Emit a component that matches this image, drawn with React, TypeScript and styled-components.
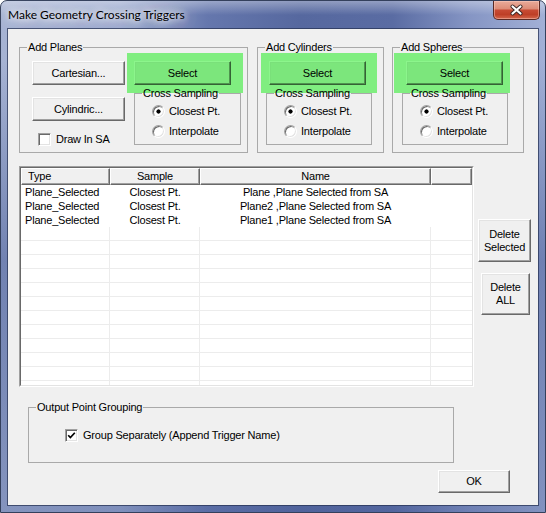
import React from "react";
import styled, { createGlobalStyle, css } from "styled-components";

const GlobalStyle = createGlobalStyle`
  html, body {
    margin: 0;
    padding: 0;
    background: #ffffff;
  }
  body {
    font-family: "Liberation Sans", Arial, sans-serif;
  }
`;

const DIALOG_FONT = css`
  font-family: "Liberation Sans", Arial, sans-serif;
  font-size: 11px;
  letter-spacing: -0.2px;
  color: #000;
`;

const Frame = styled.div`
  box-sizing: border-box;
  width: 546px;
  height: 513px;
  display: flex;
  flex-direction: column;
  padding: 0 7px 7px;
  border: 1px solid #34405c;
  border-radius: 7px 7px 0 0;
  background:
    linear-gradient(180deg, rgba(255, 255, 255, 0.35) 0px, rgba(255, 255, 255, 0) 14px),
    linear-gradient(180deg, rgba(70, 90, 150, 0) 0px, rgba(70, 90, 150, 0) 60px, rgba(70, 90, 150, 0.55) 260px, rgba(70, 90, 150, 0.35) 100%),
    linear-gradient(90deg, #a6b3d3 0%, #9eacd0 22%, #6577ad 38%, #56689f 55%, #5a6ca3 72%, #8595c4 86%, #a2b0d6 100%);
`;

const TitleBar = styled.div`
  height: 28px;
  display: flex;
  align-items: flex-start;
`;

const TitleText = styled.div`
  padding-top: 6px;
  font-family: Lato, "Liberation Sans", sans-serif;
  font-size: 12px;
  line-height: 16px;
  color: #000;
  text-shadow:
    0 0 6px rgba(255, 255, 255, 0.95),
    0 0 10px rgba(255, 255, 255, 0.9),
    0 0 16px rgba(255, 255, 255, 0.8),
    0 0 22px rgba(255, 255, 255, 0.7);
`;

const CloseButton = styled.div`
  box-sizing: border-box;
  margin-left: auto;
  margin-right: -2px;
  width: 47px;
  height: 19px;
  display: flex;
  align-items: center;
  justify-content: center;
  border: 1px solid #5a2a24;
  border-top: none;
  border-radius: 0 0 5px 5px;
  background: linear-gradient(180deg, #e9ab9a 0%, #dd8d78 42%, #c74a33 52%, #be3f27 75%, #d3674c 100%);
  box-shadow: inset 0 0 0 1px rgba(255, 210, 200, 0.45);
`;

const Client = styled.div`
  flex: 1;
  display: flex;
  flex-direction: column;
  padding: 12px 0 0 11px;
  background: #f0f0f0;
  box-shadow: 0 0 0 1px rgba(40, 52, 86, 0.75);
  ${DIALOG_FONT};
`;

const GroupRow = styled.div`
  display: flex;
  align-items: flex-start;
`;

const Group = styled.fieldset<{ $w: number; $h: number; $ml?: number; $mt?: number }>`
  box-sizing: border-box;
  width: ${(p) => p.$w}px;
  height: ${(p) => p.$h}px;
  margin: ${(p) => p.$mt ?? 0}px 0 0 ${(p) => p.$ml ?? 0}px;
  padding: 0;
  min-inline-size: 0;
  border: 1px solid #a9a9a9;
  display: flex;
  flex-direction: column;
  align-items: flex-start;
`;

const Caption = styled.legend`
  margin-left: 7px;
  padding: 0 1px;
  line-height: 13px;
  white-space: nowrap;
`;

const PlanesBody = styled.div`
  display: flex;
  align-items: flex-start;
`;

const ButtonStack = styled.div`
  display: flex;
  flex-direction: column;
  gap: 12px;
  margin-left: 12px;
  padding-top: 7px;
`;

const Btn = styled.button<{ $w: number; $h: number; $tone?: "green" }>`
  box-sizing: border-box;
  width: ${(p) => p.$w}px;
  height: ${(p) => p.$h}px;
  padding: 0;
  ${DIALOG_FONT};
  line-height: 13px;
  text-align: center;
  background: #f0f0f0;
  border: 1px solid;
  border-color: #ffffff #696969 #696969 #ffffff;
  box-shadow: inset -1px -1px 0 #a0a0a0, inset 1px 1px 0 #e3e3e3;
  ${(p) =>
    p.$tone === "green" &&
    css`
      background: #7ce67c;
      border-color: #8cf58c #356235 #356235 #8cf58c;
      box-shadow: inset -1px -1px 0 #4f944f, inset 1px 1px 0 #7ae07a;
    `}
`;

const SelectCol = styled.div<{ $ml: number }>`
  display: flex;
  flex-direction: column;
  align-items: flex-start;
  margin: -1px 0 0 ${(p) => p.$ml}px;
`;

const Highlight = styled.div<{ $pad: number }>`
  box-sizing: border-box;
  width: 116px;
  height: 40px;
  padding: 8px 0 0 ${(p) => p.$pad}px;
  background: #80ee80;
`;

const RadioList = styled.div`
  display: flex;
  flex-direction: column;
  gap: 7px;
  padding: 5px 0 0 17px;
`;

const OptionRow = styled.label`
  display: flex;
  align-items: center;
  gap: 4px;
  height: 13px;
  line-height: 13px;
  white-space: nowrap;
`;

const Radio = styled.span<{ $on?: boolean }>`
  box-sizing: border-box;
  width: 13px;
  height: 13px;
  flex: none;
  border-radius: 50%;
  border: 1px solid;
  border-color: #a0a0a0 #ffffff #ffffff #a0a0a0;
  box-shadow: inset 1px 1px 0 #696969, inset -1px -1px 0 #e3e3e3;
  background: ${(p) =>
    p.$on ? "radial-gradient(circle, #000 0 1.8px, #ffffff 2.4px)" : "#ffffff"};
`;

const CheckBox = styled.span`
  box-sizing: border-box;
  width: 13px;
  height: 13px;
  flex: none;
  display: flex;
  align-items: center;
  justify-content: center;
  background: #ffffff;
  border: 1px solid;
  border-color: #a0a0a0 #ffffff #ffffff #a0a0a0;
  box-shadow: inset 1px 1px 0 #696969, inset -1px -1px 0 #e3e3e3;
`;

const CheckRow = styled(OptionRow)<{ $indent: number; $top?: number }>`
  margin: ${(p) => p.$top ?? 0}px 0 0 ${(p) => p.$indent}px;
  gap: 5px;
`;

const ListRow = styled.div`
  display: flex;
  align-items: flex-start;
  margin-top: 13px;
`;

const List = styled.div`
  box-sizing: border-box;
  width: 455px;
  height: 221px;
  display: flex;
  border: 1px solid;
  border-color: #a0a0a0 #ffffff #ffffff #a0a0a0;
`;

const ListInner = styled.div`
  flex: 1;
  overflow: hidden;
  background: #ffffff;
  border: 1px solid;
  border-color: #696969 #e3e3e3 #e3e3e3 #696969;
`;

const COLS = "89px 90px 231px 41px";

const HeaderRow = styled.div`
  display: grid;
  grid-template-columns: ${COLS};
  height: 17px;
`;

const HeaderCell = styled.div<{ $left?: boolean }>`
  box-sizing: border-box;
  background: #f0f0f0;
  border: 1px solid;
  border-color: #ffffff #696969 #696969 #ffffff;
  box-shadow: inset -1px -1px 0 #a0a0a0;
  padding-left: ${(p) => (p.$left ? "6px" : "0")};
  text-align: ${(p) => (p.$left ? "left" : "center")};
  line-height: 14px;
  white-space: nowrap;
`;

const Row = styled.div<{ $grid?: boolean }>`
  box-sizing: border-box;
  display: grid;
  grid-template-columns: ${COLS};
  height: 14px;
  ${(p) => p.$grid && css`border-bottom: 1px solid #ececec;`}
`;

const Cell = styled.div<{ $left?: boolean; $grid?: boolean }>`
  box-sizing: border-box;
  padding: 1px 0 0 ${(p) => (p.$left ? "4px" : "0")};
  text-align: ${(p) => (p.$left ? "left" : "center")};
  line-height: 13px;
  white-space: nowrap;
  overflow: hidden;
  ${(p) => p.$grid && css`border-right: 1px solid #ececec;`}
`;

const SideButtons = styled.div`
  display: flex;
  flex-direction: column;
  align-items: flex-start;
  margin-left: 4px;
  padding-top: 53px;
`;

const DeleteAll = styled(Btn)`
  margin: 11px 0 0 3px;
`;

const FooterRow = styled.div`
  display: flex;
  justify-content: flex-end;
  margin-top: 7px;
  padding-right: 28px;
`;

const entries = [
  { type: "Plane_Selected", sample: "Closest Pt.", name: "Plane ,Plane Selected from SA" },
  { type: "Plane_Selected", sample: "Closest Pt.", name: "Plane2 ,Plane Selected from SA" },
  { type: "Plane_Selected", sample: "Closest Pt.", name: "Plane1 ,Plane Selected from SA" },
];

const CheckMark = () => (
  <svg width="9" height="9" viewBox="0 0 9 9">
    <path d="M1.2 4.2 L3.4 6.6 L7.8 1.8" fill="none" stroke="#000" strokeWidth="1.7" />
  </svg>
);

const CloseGlyph = () => (
  <svg width="15" height="12" viewBox="0 0 15 12">
    <path d="M3.5 2.5 L11.5 9.5 M11.5 2.5 L3.5 9.5" stroke="#3b2624" strokeWidth="4" strokeLinecap="round" />
    <path d="M3.5 2.5 L11.5 9.5 M11.5 2.5 L3.5 9.5" stroke="#ffffff" strokeWidth="2.2" strokeLinecap="round" />
  </svg>
);

type SamplingProps = { ml: number; btnPad: number; boxMl: number; boxW: number };

const SamplingBlock: React.FC<SamplingProps> = ({ ml, btnPad, boxMl, boxW }) => (
  <SelectCol $ml={ml}>
    <Highlight $pad={btnPad}>
      <Btn $w={97} $h={24} $tone="green">
        Select
      </Btn>
    </Highlight>
    <Group $w={boxW} $h={58} $ml={boxMl} $mt={-6}>
      <Caption>Cross Sampling</Caption>
      <RadioList>
        <OptionRow>
          <Radio $on />
          Closest Pt.
        </OptionRow>
        <OptionRow>
          <Radio />
          Interpolate
        </OptionRow>
      </RadioList>
    </Group>
  </SelectCol>
);

export default function App() {
  return (
    <>
      <GlobalStyle />
      <Frame>
        <TitleBar>
          <TitleText>Make Geometry Crossing Triggers</TitleText>
          <CloseButton>
            <CloseGlyph />
          </CloseButton>
        </TitleBar>
        <Client>
          <GroupRow>
            <Group $w={229} $h={112}>
              <Caption>Add Planes</Caption>
              <PlanesBody>
                <ButtonStack>
                  <Btn $w={93} $h={24}>Cartesian...</Btn>
                  <Btn $w={93} $h={24}>Cylindric...</Btn>
                  <CheckRow $indent={6}>
                    <CheckBox />
                    Draw In SA
                  </CheckRow>
                </ButtonStack>
                <SamplingBlock ml={2} btnPad={7} boxMl={7} boxW={107} />
              </PlanesBody>
            </Group>
            <Group $w={127} $h={112} $ml={9}>
              <Caption>Add Cylinders</Caption>
              <SamplingBlock ml={3} btnPad={8} boxMl={5} boxW={106} />
            </Group>
            <Group $w={132} $h={112} $ml={8}>
              <Caption>Add Spheres</Caption>
              <SamplingBlock ml={1} btnPad={12} boxMl={8} boxW={106} />
            </Group>
          </GroupRow>

          <ListRow>
            <List>
              <ListInner>
                <HeaderRow>
                  <HeaderCell $left>Type</HeaderCell>
                  <HeaderCell>Sample</HeaderCell>
                  <HeaderCell>Name</HeaderCell>
                  <HeaderCell />
                </HeaderRow>
                {entries.map((e, i) => (
                  <Row key={i}>
                    <Cell $left>{e.type}</Cell>
                    <Cell>{e.sample}</Cell>
                    <Cell>{e.name}</Cell>
                    <Cell />
                  </Row>
                ))}
                {Array.from({ length: 12 }).map((_, i) => (
                  <Row key={`empty-${i}`} $grid>
                    <Cell $grid />
                    <Cell $grid />
                    <Cell $grid />
                    <Cell />
                  </Row>
                ))}
              </ListInner>
            </List>
            <SideButtons>
              <Btn $w={53} $h={43}>
                Delete
                <br />
                Selected
              </Btn>
              <DeleteAll $w={49} $h={42}>
                Delete
                <br />
                ALL
              </DeleteAll>
            </SideButtons>
          </ListRow>

          <Group $w={426} $h={62} $ml={9} $mt={14}>
            <Caption>Output Point Grouping</Caption>
            <CheckRow $indent={36} $top={15}>
              <CheckBox>
                <CheckMark />
              </CheckBox>
              Group Separately (Append Trigger Name)
            </CheckRow>
          </Group>

          <FooterRow>
            <Btn $w={72} $h={23}>OK</Btn>
          </FooterRow>
        </Client>
      </Frame>
    </>
  );
}
